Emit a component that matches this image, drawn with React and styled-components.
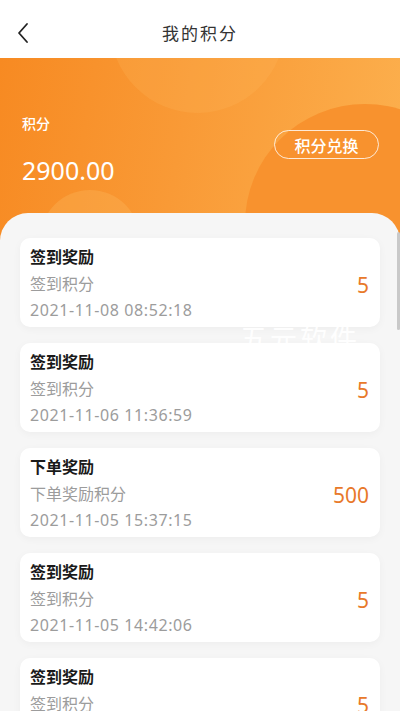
import styled, { createGlobalStyle } from "styled-components";

const GlobalStyle = createGlobalStyle`
  html, body {
    margin: 0;
    padding: 0;
    background: #f6f6f6;
  }
  body {
    font-family: "Noto Sans CJK SC", "Noto Sans", sans-serif;
  }
`;

const Page = styled.div`
  position: relative;
  width: 400px;
  height: 711px;
  overflow: hidden;
  background: #f6f6f6;
`;

const Header = styled.header`
  height: 58px;
  display: flex;
  align-items: center;
  justify-content: center;
  position: relative;
  background: #fff;
`;

const BackButton = styled.button`
  position: absolute;
  left: 12px;
  top: 20px;
  width: 22px;
  height: 26px;
  padding: 0;
  border: none;
  background: none;
  display: flex;
  align-items: center;
  justify-content: center;
`;

const Title = styled.h1`
  margin: 0;
  font-size: 17px;
  font-weight: 400;
  letter-spacing: 2px;
  color: #333;
  padding-top: 6px;
`;

const Banner = styled.section`
  position: relative;
  height: 182px;
  overflow: hidden;
  background: linear-gradient(100deg, #f78a22 0%, #f99a36 45%, #fcb04e 100%);
  display: flex;
  align-items: flex-start;
  justify-content: space-between;
  padding: 55px 21px 0 22px;
  box-sizing: border-box;
`;

const Bubble = styled.div`
  position: absolute;
  border-radius: 50%;
  background: ${(p) => p.$color};
  width: ${(p) => p.$size}px;
  height: ${(p) => p.$size}px;
  left: ${(p) => p.$x}px;
  top: ${(p) => p.$y}px;
`;

const Balance = styled.div`
  position: relative;
  color: #fff;
  display: flex;
  flex-direction: column;
`;

const BalanceLabel = styled.span`
  font-size: 14px;
  line-height: 20px;
  font-weight: 500;
`;

const BalanceValue = styled.span`
  margin-top: 22px;
  font-family: "Noto Sans", sans-serif;
  font-size: 25px;
  line-height: 30px;
`;

const ExchangeButton = styled.button`
  position: relative;
  margin-top: 17px;
  width: 105px;
  height: 29px;
  border: 1.5px solid rgba(255, 255, 255, 0.8);
  border-radius: 15px;
  background: transparent;
  color: #fff;
  font-family: "Noto Sans CJK SC", sans-serif;
  font-size: 16px;
  font-weight: 500;
  line-height: 1;
  padding: 0;
`;

const Panel = styled.main`
  position: relative;
  margin-top: -27px;
  border-radius: 28px 28px 0 0;
  background: #f6f6f6;
  padding: 25px 20px 0;
  display: flex;
  flex-direction: column;
  gap: 16px;
`;

const Card = styled.div`
  height: 89px;
  box-sizing: border-box;
  background: #fff;
  border-radius: 10px;
  box-shadow: 0 2px 8px rgba(0, 0, 0, 0.04);
  padding: 5px 11px 3px 10px;
  display: flex;
  align-items: center;
  justify-content: space-between;
`;

const Info = styled.div`
  display: flex;
  flex-direction: column;
  align-self: flex-start;
`;

const CardTitle = styled.span`
  font-size: 16px;
  line-height: 27px;
  font-weight: 700;
  color: #1a1a1a;
`;

const CardSub = styled.span`
  font-size: 16px;
  line-height: 27px;
  color: #9c9c9c;
`;

const CardDate = styled.span`
  font-family: "Noto Sans", sans-serif;
  font-size: 16px;
  line-height: 27px;
  letter-spacing: 0.6px;
  color: #9c9c9c;
`;

const Amount = styled.span`
  font-family: "Noto Sans", sans-serif;
  font-size: 21px;
  color: #e8792a;
  padding-top: 2px;
`;

const Watermark = styled.div`
  position: absolute;
  left: 240px;
  top: 318px;
  font-size: 27px;
  letter-spacing: 3px;
  color: rgba(255, 255, 255, 0.95);
  pointer-events: none;
`;

const Scrollbar = styled.div`
  position: absolute;
  right: 0;
  top: 232px;
  width: 3px;
  height: 98px;
  border-radius: 2px;
  background: #c9c9c9;
`;

const records = [
  { title: "签到奖励", sub: "签到积分", date: "2021-11-08 08:52:18", amount: 5 },
  { title: "签到奖励", sub: "签到积分", date: "2021-11-06 11:36:59", amount: 5 },
  { title: "下单奖励", sub: "下单奖励积分", date: "2021-11-05 15:37:15", amount: 500 },
  { title: "签到奖励", sub: "签到积分", date: "2021-11-05 14:42:06", amount: 5 },
  { title: "签到奖励", sub: "签到积分", date: "2021-11-04 09:12:33", amount: 5 },
];

export default function App() {
  return (
    <Page>
      <GlobalStyle />
      <Header>
        <BackButton aria-label="返回">
          <svg width="14" height="22" viewBox="0 0 14 22" fill="none">
            <polyline
              points="11,2 3,11 11,20"
              stroke="#222"
              strokeWidth="1.8"
              strokeLinecap="round"
              strokeLinejoin="round"
            />
          </svg>
        </BackButton>
        <Title>我的积分</Title>
      </Header>

      <Banner>
        <Bubble $color="rgba(253, 185, 95, 0.22)" $size={175} $x={110} $y={-120} />
        <Bubble $color="#f8922e" $size={240} $x={245} $y={46} />
        <Bubble $color="rgba(253, 190, 100, 0.3)" $size={100} $x={40} $y={132} />
        <Balance>
          <BalanceLabel>积分</BalanceLabel>
          <BalanceValue>2900.00</BalanceValue>
        </Balance>
        <ExchangeButton>积分兑换</ExchangeButton>
      </Banner>

      <Panel>
        {records.map((r, i) => (
          <Card key={i}>
            <Info>
              <CardTitle>{r.title}</CardTitle>
              <CardSub>{r.sub}</CardSub>
              <CardDate>{r.date}</CardDate>
            </Info>
            <Amount>{r.amount}</Amount>
          </Card>
        ))}
      </Panel>

      <Watermark>五元软件</Watermark>
      <Scrollbar />
    </Page>
  );
}
